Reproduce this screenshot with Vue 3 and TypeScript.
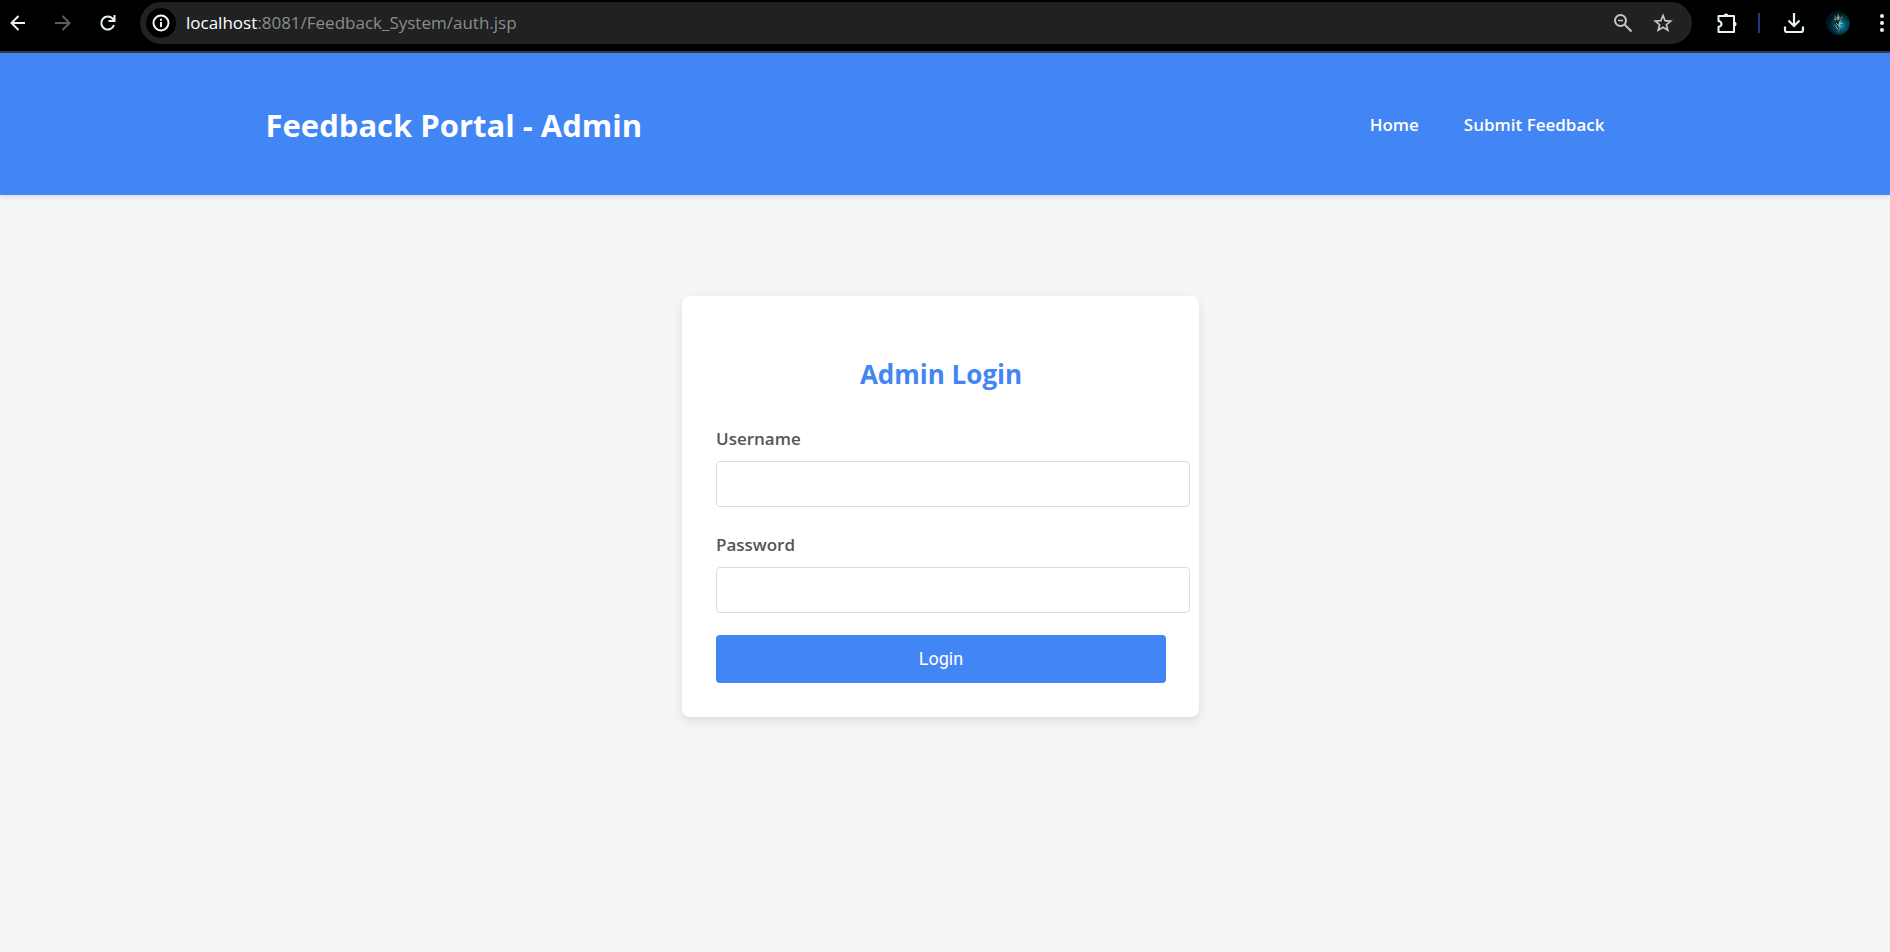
<script setup lang="ts">
import { ref } from 'vue'

const username = ref('')
const password = ref('')
const links: string[] = ['Home', 'Submit Feedback']
</script>

<template>
  <div class="window">
    <div class="toolbar">
      <div class="nav-buttons">
        <button type="button" aria-label="Back">
          <svg width="18" height="18" viewBox="0 0 18 18" fill="none" stroke="#e8f1f3" stroke-width="2"><path d="M16 9H2.500M9.500 2 2.500 9l7 7" /></svg>
        </button>
        <button type="button" aria-label="Forward">
          <svg width="18" height="18" viewBox="0 0 18 18" fill="none" stroke="#5c5f60" stroke-width="2"><path d="M1 9h14.500M8.500 2l7 7-7 7" /></svg>
        </button>
        <button type="button" aria-label="Reload">
          <svg width="18" height="18" viewBox="0 0 18 18" fill="none" stroke="#e8f1f3" stroke-width="2"><path d="M15 11A6.500 6.500 0 1 1 13.500 4.500l2 2M15.500 1v6h-6" /></svg>
        </button>
      </div>
      <div class="address">
        <button type="button" class="info" aria-label="Site information">
          <svg width="18" height="18" viewBox="0 0 18 18" fill="none" stroke="#f3f6f6" stroke-width="2"><circle cx="9" cy="9" r="7.500" /><path d="M9 8v5M9 4.800v2" /></svg>
        </button>
        <span class="url"><b>localhost</b>:8081/Feedback_System/auth.jsp</span>
        <button type="button" aria-label="Zoom">
          <svg width="20" height="20" viewBox="0 0 20 20" fill="none" stroke="#c4c5c5" stroke-width="2"><circle cx="7.500" cy="7.500" r="5.500" /><path d="m11.500 11.500 7 7" /><path d="M5 7.500h5" stroke-width="1.500" /></svg>
        </button>
        <button type="button" aria-label="Bookmark">
          <svg width="20" height="20" viewBox="0 0 20 20" fill="none" stroke="#c4c5c5" stroke-width="1.700"><path d="m10 2.500 2.100 5.200 5.600.4-4.300 3.600 1.400 5.500-4.800-3-4.800 3 1.400-5.500-4.300-3.600 5.600-.4z" /></svg>
        </button>
      </div>
      <div class="actions">
        <button type="button" aria-label="Extensions">
          <svg width="22" height="22" viewBox="0 0 22 22"><path d="M2.500 4H18v16H2.500v-5c4-1 4-5 0-6z" fill="none" stroke="#e8f1f3" stroke-width="2" stroke-linejoin="round" /><path d="M7.500 4a2.500 2.500 0 0 1 5 0zM18 9.500a2.500 2.500 0 0 1 0 5z" fill="#e8f1f3" /></svg>
        </button>
        <span class="divider"></span>
        <button type="button" aria-label="Downloads">
          <svg width="22" height="22" viewBox="0 0 22 22" fill="none" stroke="#e8f1f3" stroke-width="2.200"><path d="M11 1v12.500M5.500 8.500l5.500 5.500 5.500-5.500M2 14.500V18q0 2 2 2h14q2 0 2-2v-3.500" /></svg>
        </button>
        <button type="button" aria-label="Profile">
          <svg width="26" height="26" viewBox="0 0 26 26">
            <defs><radialGradient id="glow" cx=".62" cy=".6" r=".5"><stop offset="0" stop-color="#10a6c6" /><stop offset=".4" stop-color="#07566e" /><stop offset="1" stop-color="#03151f" /></radialGradient></defs>
            <circle cx="13" cy="13" r="12" fill="url(#glow)" />
            <path d="m9 5 3 3 1-5 2 5 3-2-2 5 2 3-3 2-1 7-2-6-3-2 2-3z" fill="#667b76" />
            <path d="m10 8 3 3 3-3-1 5 2 1-3 2-1 5-1-6-3-1 2-2z" fill="#071c24" />
            <path d="m14 12 4 1-3 2 1 3-3-2z" fill="#49d4e8" />
            <path d="m9 9 2 1m0 3 2 2m0-9v3m3 1-2 2m-3 5 2 2" stroke="#9db3aa" stroke-width="1" />
          </svg>
        </button>
        <button type="button" class="menu" aria-label="Menu">
          <svg width="6" height="20" viewBox="0 0 6 20" fill="#e8f1f3"><circle cx="3" cy="3" r="2" /><circle cx="3" cy="10" r="2" /><circle cx="3" cy="17" r="2" /></svg>
        </button>
      </div>
    </div>

    <header class="header">
      <div class="container">
        <h1>Feedback Portal - Admin</h1>
        <nav><a v-for="link in links" :key="link" href="#">{{ link }}</a></nav>
      </div>
    </header>

    <main>
      <form class="card" @submit.prevent>
        <h2>Admin Login</h2>
        <label for="username">Username</label>
        <input id="username" v-model="username" type="text" />
        <label for="password">Password</label>
        <input id="password" v-model="password" type="password" />
        <button type="submit" class="login">Login</button>
      </form>
    </main>
  </div>
</template>

<style>
body {
  margin: 0;
  background: #f5f5f5;
}
</style>

<style scoped>
.window {
  min-height: 100vh;
  font-family: "Open Sans", "Noto Sans", sans-serif;
}
button {
  border: 0;
  padding: 0;
  background: none;
  cursor: pointer;
}
svg {
  display: block;
}
.toolbar {
  display: flex;
  align-items: center;
  box-sizing: border-box;
  height: 53px;
  padding: 0 5px 6px 9px;
  background: #000;
  border-bottom: 2px solid #303a4c;
}
.nav-buttons {
  display: flex;
  gap: 27px;
  width: 131px;
}
.address {
  flex: 1;
  display: flex;
  align-items: center;
  gap: 20px;
  height: 42px;
  padding: 0 19px 0 6px;
  border-radius: 21px;
  background: #202222;
}
.info {
  display: grid;
  place-items: center;
  width: 30px;
  height: 30px;
  border-radius: 50%;
  background: #000;
}
.url {
  flex: 1;
  margin-left: -10px;
  font: 17px/24px "Open Sans", sans-serif;
  color: #8b8c8c;
}
.url b {
  font-weight: 400;
  color: #fff;
}
.actions {
  display: flex;
  align-items: center;
  gap: 20px;
  margin-left: 24px;
}
.divider {
  width: 2px;
  height: 20px;
  margin-right: 3px;
  background: #1f3b78;
}
.menu {
  margin-left: 8px;
}
.header {
  padding: 0 9px 0 0;
  background: #4285f4;
  box-shadow: 0 2px 5px rgba(0, 0, 0, 0.1);
}
.container {
  display: flex;
  align-items: center;
  justify-content: space-between;
  box-sizing: border-box;
  max-width: 1350px;
  height: 142px;
  margin: 0 auto;
  padding: 2px 11px 0 0;
}
h1 {
  margin: 0;
  font-size: 31px;
  line-height: 44px;
  font-weight: 700;
  color: #fff;
}
nav {
  display: flex;
  gap: 45px;
}
nav a {
  font-size: 17px;
  line-height: 24px;
  font-weight: 600;
  color: #fff;
  text-decoration: none;
}
main {
  padding: 101px 9px 40px 0;
}
.card {
  box-sizing: border-box;
  max-width: 517px;
  margin: 0 auto;
  padding: 60px 33px 34px 34px;
  border-radius: 8px;
  background: #fff;
  box-shadow: 0 4px 10px rgba(0, 0, 0, 0.1);
}
h2 {
  margin: 0 0 34px;
  font-size: 26px;
  line-height: 36px;
  font-weight: 700;
  text-align: center;
  color: #4285f4;
}
label {
  display: block;
  margin-bottom: 10px;
  font-size: 17px;
  line-height: 25px;
  font-weight: 600;
  color: #555;
}
input {
  display: block;
  box-sizing: border-box;
  width: calc(100% + 24px);
  height: 46px;
  margin-bottom: 25px;
  padding: 0 11px;
  border: 1px solid #ddd;
  border-radius: 4px;
  font-size: 17px;
  background: #fff;
}
.login {
  display: block;
  width: 100%;
  height: 48px;
  margin-top: -3px;
  padding-bottom: 2px;
  border-radius: 4px;
  background: #4285f4;
  color: #fff;
  font: 18px Roboto, Arial, sans-serif;
}
</style>
